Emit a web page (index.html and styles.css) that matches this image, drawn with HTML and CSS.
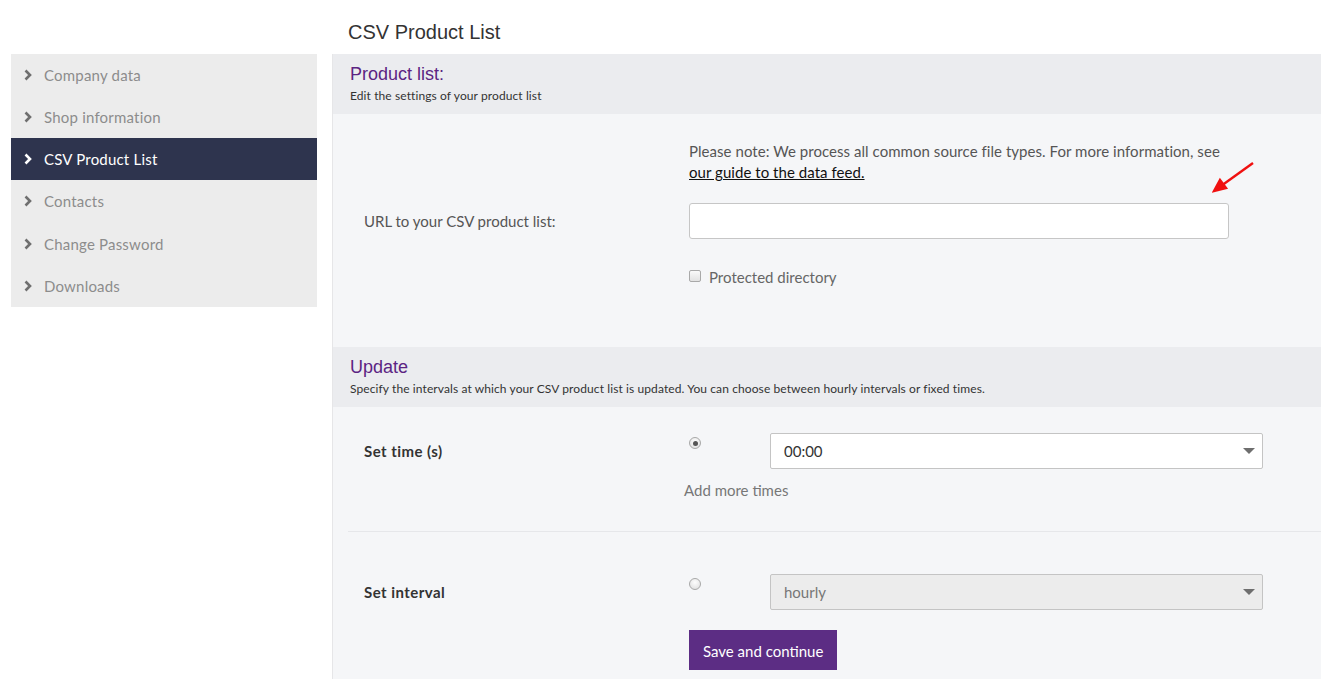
FILE: index.html
```html
<!DOCTYPE html>
<html lang="en">
<head>
<meta charset="utf-8">
<title>CSV Product List</title>
<link rel="stylesheet" href="styles.css">
</head>
<body>
<div class="layout">
  <div class="side-col">
    <nav class="sidebar">
      <a class="nav-item" href="#"><svg class="chev" viewBox="0 0 8 12"><polyline points="1.5,1.5 6,6 1.5,10.5"/></svg>Company data</a>
      <a class="nav-item" href="#"><svg class="chev" viewBox="0 0 8 12"><polyline points="1.5,1.5 6,6 1.5,10.5"/></svg>Shop information</a>
      <a class="nav-item active" href="#"><svg class="chev" viewBox="0 0 8 12"><polyline points="1.5,1.5 6,6 1.5,10.5"/></svg>CSV Product List</a>
      <a class="nav-item" href="#"><svg class="chev" viewBox="0 0 8 12"><polyline points="1.5,1.5 6,6 1.5,10.5"/></svg>Contacts</a>
      <a class="nav-item" href="#"><svg class="chev" viewBox="0 0 8 12"><polyline points="1.5,1.5 6,6 1.5,10.5"/></svg>Change Password</a>
      <a class="nav-item" href="#"><svg class="chev" viewBox="0 0 8 12"><polyline points="1.5,1.5 6,6 1.5,10.5"/></svg>Downloads</a>
    </nav>
  </div>
  <main class="main-col">
    <h1 class="page-title">CSV Product List</h1>
    <div class="panel">
      <div class="section-head">
        <h2 class="section-title">Product list:</h2>
        <p class="section-sub">Edit the settings of your product list</p>
      </div>
      <div class="section-body url-body">
        <div class="url-grid">
          <p class="note">Please note: We process all common source file types. For more information, see <a class="guide-link" href="#">our guide to the data feed.</a></p>
          <label class="field-label url-label">URL to your CSV product list:</label>
          <input class="text-input" type="text">
          <div class="check-row"><span class="checkbox"></span>Protected directory</div>
        </div>
        <svg class="annot-arrow" viewBox="0 0 44 32"><line x1="41" y1="2" x2="9" y2="25" /><polygon points="2,30 8,19 14,27"/></svg>
      </div>
      <div class="section-head">
        <h2 class="section-title">Update</h2>
        <p class="section-sub">Specify the intervals at which your CSV product list is updated. You can choose between hourly intervals or fixed times.</p>
      </div>
      <div class="section-body update-body">
        <div class="time-row">
          <span class="field-label bold">Set time (s)</span>
          <div class="time-controls">
            <span class="radio checked"></span>
            <div class="select"><span>00:00</span><span class="caret"></span></div>
            <span class="add-more">Add more times</span>
          </div>
        </div>
        <div class="interval-row">
          <span class="field-label bold">Set interval</span>
          <div class="time-controls">
            <span class="radio"></span>
            <div class="select disabled"><span>hourly</span><span class="caret"></span></div>
          </div>
          <div class="actions">
            <button class="btn-primary" type="button">Save and continue</button>
          </div>
        </div>
      </div>
    </div>
  </main>
</div>
</body>
</html>
```
FILE: styles.css
```css
* { box-sizing: border-box; }
html, body { margin: 0; padding: 0; background: #fff; }
body {
  font-family: "Lato", "Liberation Sans", sans-serif;
  font-size: 15px;
  color: #555;
  height: 679px;
  overflow: hidden;
}
.layout {
  display: grid;
  grid-template-columns: 306px 989px;
  column-gap: 15px;
  padding-left: 11px;
}
.side-col { padding-top: 54px; }
.sidebar {
  background: #ececec;
  display: flex;
  flex-direction: column;
}
.nav-item {
  height: 42px;
  display: flex;
  align-items: center;
  padding-left: 13px;
  color: #8c8c8c;
  text-decoration: none;
  letter-spacing: 0.2px;
}
.nav-item:nth-child(5) { height: 43px; }
.chev {
  width: 8px;
  height: 12px;
  margin-right: 12px;
  fill: none;
  stroke: #6f6f6f;
  stroke-width: 2.6;
}
.nav-item.active { background: #2e344e; color: #fff; }
.nav-item.active .chev { stroke: #fff; }

.main-col { display: flex; flex-direction: column; }
.page-title {
  margin: 0;
  height: 54px;
  padding: 20px 0 0 16px;
  font-family: "Liberation Sans", Arial, sans-serif;
  font-weight: normal;
  font-size: 20px;
  line-height: 24px;
  color: #333;
}
.panel {
  border-left: 1px solid #e6e6e8;
  background: #f5f6f8;
  min-height: 700px;
}
.section-head {
  background: #ebecef;
  padding: 10px 18px 0 17px;
  height: 60px;
}
.section-title {
  margin: 0;
  font-family: "Liberation Sans", Arial, sans-serif;
  font-weight: normal;
  font-size: 18px;
  line-height: 21px;
  color: #5c2483;
}
.section-sub {
  margin: 4px 0 0;
  font-size: 12px;
  line-height: 14px;
  color: #333;
  letter-spacing: 0.1px;
}
.section-body { position: relative; }
.url-body { padding: 27px 0 0 31px; height: 233px; }
.url-grid {
  display: grid;
  grid-template-columns: 325px 540px;
}
.note {
  grid-column: 2;
  grid-row: 1;
  margin: 0 0 20px;
  line-height: 21px;
  color: #555;
  letter-spacing: 0.05px;
}
.guide-link { color: #111; text-decoration: underline; }
.field-label { color: #555; }
.url-label { grid-column: 1; grid-row: 2; align-self: center; }
.text-input {
  grid-column: 2;
  grid-row: 2;
  height: 36px;
  border: 1px solid #c6c6c6;
  border-radius: 3px;
  background: #fff;
  width: 540px;
  margin: 0;
}
.check-row {
  grid-column: 2;
  grid-row: 3;
  margin-top: 28px;
  display: flex;
  align-items: center;
  line-height: 21px;
  color: #666;
}
.checkbox {
  width: 12px;
  height: 12px;
  border: 1px solid #a9a9a9;
  border-radius: 2px;
  background: linear-gradient(#fafafa, #e2e2e2);
  margin-right: 8px;
  margin-top: -3px;
}
.annot-arrow {
  position: absolute;
  left: 879px;
  top: 47px;
  width: 44px;
  height: 32px;
  stroke: #f01010;
  stroke-width: 2.4;
  fill: #f01010;
}

.time-row {
  display: grid;
  grid-template-columns: 325px auto;
  padding: 26px 0 30px 16px;
  border-bottom: 1px solid #e6e7ea;
  margin-left: 15px;
}
.interval-row {
  display: grid;
  grid-template-columns: 325px auto;
  padding: 42px 0 0 31px;
}
.bold { font-weight: bold; color: #333; align-self: start; line-height: 36px; letter-spacing: 0.45px; }
.time-controls {
  display: grid;
  grid-template-columns: 81px 493px;
  align-items: start;
}
.radio {
  width: 12px;
  height: 12px;
  border-radius: 50%;
  border: 1px solid #a8a8a8;
  background: radial-gradient(circle at 50% 35%, #fdfdfd, #dcdcdc);
  margin: 4px 0 0 0;
  position: relative;
}
.radio.checked::after {
  content: "";
  position: absolute;
  left: 2.5px;
  top: 2.5px;
  width: 5px;
  height: 5px;
  border-radius: 50%;
  background: #555;
}
.select {
  height: 36px;
  border: 1px solid #c4c4c4;
  border-radius: 2px;
  background: #fff;
  display: flex;
  align-items: center;
  justify-content: space-between;
  padding: 0 7px 0 13px;
  color: #333;
}
.select.disabled { background: #ececec; color: #777; }
.caret {
  width: 0;
  height: 0;
  border-left: 6px solid transparent;
  border-right: 6px solid transparent;
  border-top: 6px solid #6e6e6e;
}
.add-more {
  grid-column: 1 / span 2;
  margin: 11px 0 0 -5px;
  line-height: 21px;
  color: #777;
}
.actions {
  grid-column: 2;
  padding-top: 20px;
}
.btn-primary {
  height: 40px;
  padding: 2px 14px 0;
  border: 0;
  background: #5c2d84;
  color: #fff;
  font-family: "Lato", "Liberation Sans", sans-serif;
  font-size: 15px;
  cursor: pointer;
}
```
